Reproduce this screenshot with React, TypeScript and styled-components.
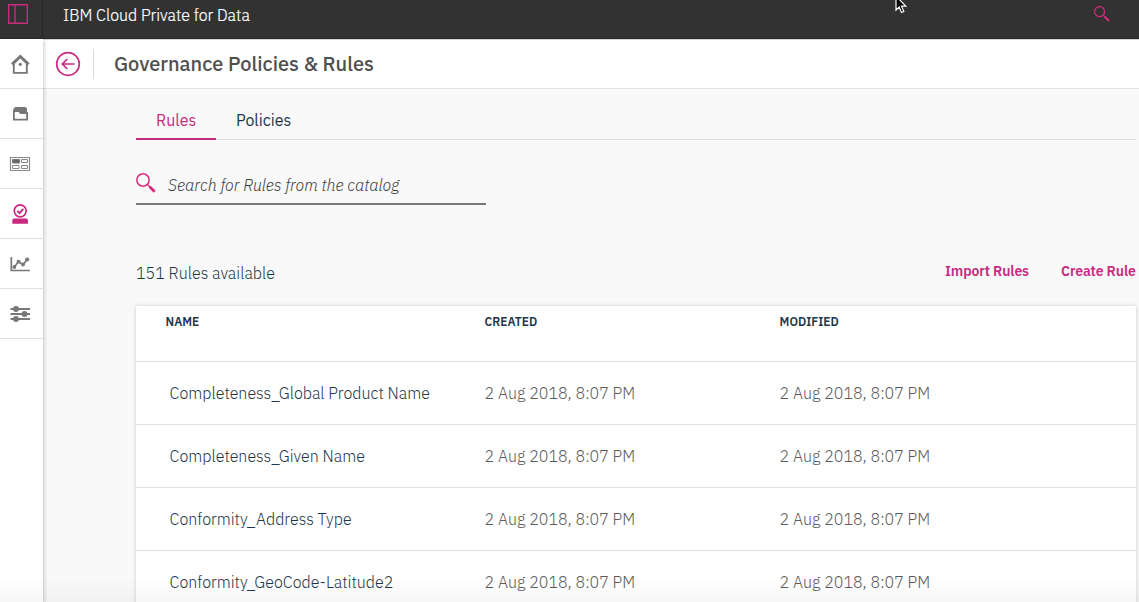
import React from "react";
import styled, { createGlobalStyle } from "styled-components";

const pink = "#c72a7f";
const navy = "#1d3649";

const GlobalStyle = createGlobalStyle`
  * { box-sizing: border-box; }
  body {
    margin: 0;
    overflow: hidden;
    background: #f9f9f9;
    font-family: "IBM Plex Sans", Roboto, sans-serif;
    font-size: 16px;
    color: ${navy};
  }
`;

const Page = styled.div`
  position: relative;
  display: flex;
  flex-direction: column;
  width: 1139px;
  height: 602px;
  overflow: hidden;
`;

const TopBar = styled.header`
  display: flex;
  flex: none;
  height: 39px;
  background: #323232;
  border-bottom: 1px solid #282828;
`;

const MenuButton = styled.div`
  width: 43px;
  padding: 4px 0 0 8px;
  border-right: 1px solid #272727;
`;

const Brand = styled.div`
  flex: 1;
  padding-left: 20px;
  line-height: 30px;
  font-weight: 300;
  -webkit-text-stroke: 0.2px #fff;
  color: #fff;
  white-space: nowrap;
`;

const TopSearch = styled.div`
  width: 45px;
  padding: 6px 0 0 0.4px;
`;

const Below = styled.div`
  display: flex;
  flex: 1;
  min-height: 0;
`;

const Sidebar = styled.nav`
  position: relative;
  z-index: 1;
  width: 43px;
  flex: none;
  background: #fff;
  box-shadow: 1px 2px 4px rgba(0, 0, 0, 0.22);
`;

const NavItem = styled.div`
  display: flex;
  align-items: center;
  height: 50px;
  padding-left: 8px;
  border-bottom: 1px solid #dfdfdf;
`;

const Main = styled.main`
  flex: 1;
  min-width: 0;
`;

const TitleBar = styled.div`
  display: flex;
  align-items: center;
  height: 50px;
  padding-left: 12px;
  background: #fff;
  border-top: 1px solid #d4d4d4;
  border-bottom: 1px solid #e3e3e3;
`;

const Divider = styled.div`
  width: 1px;
  height: 30px;
  margin: 0 20px 0 12px;
  background: #dcdcdc;
`;

const Title = styled.h1`
  margin: 0;
  padding-bottom: 2px;
  font-size: 20px;
  font-weight: 500;
  color: #505050;
  white-space: nowrap;
`;

const Content = styled.div`
  padding: 13px 3px 0 93px;
`;

const Tabs = styled.div`
  display: flex;
  height: 38px;
  box-shadow: inset 0 -1px 0 #dedede;
`;

const Tab = styled.div<{ $active?: boolean }>`
  height: 38px;
  padding: 0 20px;
  width: ${(p) => (p.$active ? "80px" : "auto")};
  line-height: 37px;
  color: ${(p) => (p.$active ? pink : navy)};
  border-bottom: ${(p) => (p.$active ? `2px solid ${pink}` : "none")};
  white-space: nowrap;
`;

const SearchField = styled.div`
  display: flex;
  width: 350px;
  height: 38px;
  margin-top: 27px;
  border-bottom: 2px solid #777a78;

  svg {
    margin-top: 6px;
  }
`;

const Placeholder = styled.span`
  padding-left: 12px;
  line-height: 37px;
  font-style: italic;
  font-weight: 300;
  color: #3c4043;
  white-space: nowrap;
`;

const Summary = styled.div`
  display: flex;
  height: 40px;
  margin-top: 48px;
`;

const Count = styled.div`
  flex: 1;
  line-height: 41px;
  font-weight: 300;
  color: ${navy};
`;

const Action = styled.div<{ $width: number }>`
  width: ${(p) => p.$width}px;
  line-height: 37px;
  font-size: 14px;
  font-weight: 600;
  letter-spacing: -0.1px;
  color: ${pink};
  white-space: nowrap;
`;

const Table = styled.div`
  height: 320px;
  margin-top: 13px;
  background: #fff;
  box-shadow: 0 0 4px rgba(0, 0, 0, 0.18);
`;

const Row = styled.div<{ $head?: boolean }>`
  display: grid;
  grid-template-columns: 319px 295px 1fr;
  height: ${(p) => (p.$head ? 56 : 63)}px;
  padding-left: 29.6px;
  line-height: ${(p) => (p.$head ? 32 : 63)}px;
  font-size: ${(p) => (p.$head ? 12 : 16)}px;
  font-weight: ${(p) => (p.$head ? 600 : 300)};
  border-bottom: 1px solid #e0e0e0;
  white-space: nowrap;
`;

const NameCell = styled.span`
  padding-left: 4px;
  color: ${navy};
`;

const DateCell = styled.span`
  color: #5a5a5a;
`;

const BottomFade = styled.div`
  position: absolute;
  inset: auto 0 0 0;
  height: 26px;
  z-index: 2;
  pointer-events: none;
  background: linear-gradient(rgba(0, 0, 0, 0), rgba(0, 0, 0, 0.03));
`;

const Pointer = styled.svg`
  position: absolute;
  left: 894px;
  top: -5px;
`;

const Magnifier = ({ size }: { size: number }) => (
  <svg width={size} height={size} viewBox="0 0 20 20" fill="none" stroke="#d92b7d">
    <circle cx="7" cy="7" r="6.2" strokeWidth="1.5" />
    <path d="M11.8 11.8l2.4 2.4" strokeWidth="1.3" />
    <path d="M13.7 13.7l5 5" strokeWidth="2.8" />
  </svg>
);

const icons = [
  <svg key="home" width="24" height="24" fill="none" stroke="#777" strokeWidth="1.9">
    <path d="M5.8 11.5v9.4h13v-9.4" />
    <path d="M4 12.4L12.3 4.5l8.3 7.9" strokeWidth="2.9" />
    <circle cx="12.3" cy="12.3" r="1.6" fill="#777" stroke="none" />
  </svg>,
  <svg key="folder" width="24" height="24" fill="none" stroke="#777" strokeWidth="1.8">
    <path d="M6 9.5V6.5l1-1h10.500l1 1v3.500z" fill="#777" strokeWidth="1" />
    <path d="M5.900 17.700V9h5l2 2h6.200v6.700z" fill="#fff" />
  </svg>,
  <svg key="cards" width="24" height="24" fill="none" stroke="#8a8a8a">
    <path d="M2.500 5.500h19v13h-19z" strokeWidth="1.200" />
    <path d="M4.500 7.500h7v3.500h-7z" fill="#666" stroke="#777" />
    <path d="M13.500 7.500h6v3h-6zM4.500 13.500h6.500v3H4.500zM13.500 13.500h6v3h-6z" />
  </svg>,
  <svg key="governance" width="24" height="24" fill="none" stroke={pink} strokeWidth="1.700">
    <circle cx="12.200" cy="8.800" r="6" />
    <path d="M9.300 8.800l2.300 2.300 3.700-4.300" strokeWidth="1.900" />
    <path d="M4.300 21.800v-3.300q0-2 2-2h11.700q2 0 2 2v3.300z" fill={pink} stroke="none" />
  </svg>,
  <svg key="chart" width="24" height="24" fill="none" stroke="#777" strokeWidth="1.700">
    <path d="M3.300 5v13.500h18.500" />
    <path d="M6 15.500l4.500-6 4.500 3.300 4-5" />
    <g fill="#777" stroke="none">
      <circle cx="6.300" cy="15" r="1.900" />
      <circle cx="10.500" cy="9.700" r="1.900" />
      <circle cx="15" cy="12.500" r="1.900" />
      <circle cx="19.200" cy="7.500" r="2.100" />
    </g>
  </svg>,
  <svg key="sliders" width="24" height="24" stroke="#777" strokeWidth="1.900" fill="#777">
    <path d="M2.500 7h19.500M2.500 12h19.500M2.500 17h19.500" />
    <circle cx="8" cy="7" r="2" />
    <circle cx="16.500" cy="12" r="2" />
    <circle cx="8" cy="17" r="2" />
  </svg>,
];

const rules = [
  "Completeness_Global Product Name",
  "Completeness_Given Name",
  "Conformity_Address Type",
  "Conformity_GeoCode-Latitude2",
];
const stamp = "2 Aug 2018, 8:07 PM";

export default function App() {
  return (
    <Page>
      <GlobalStyle />
      <TopBar>
        <MenuButton>
          <svg width="20" height="20" fill="none" stroke={pink} strokeWidth="1.400">
            <path d="M.7.7h18.600v18.600H.7zM7 .7v18.600" />
          </svg>
        </MenuButton>
        <Brand>IBM Cloud Private for Data</Brand>
        <TopSearch><Magnifier size={16} /></TopSearch>
      </TopBar>
      <Below>
        <Sidebar>
          {icons.map((icon) => <NavItem key={icon.key}>{icon}</NavItem>)}
        </Sidebar>
        <Main>
          <TitleBar>
            <svg width="26" height="26" fill="none" stroke={pink} strokeWidth="1.700">
              <circle cx="13" cy="13" r="11.300" />
              <path d="M19.500 13H7.500M12.300 8l-5 5 5 5" />
            </svg>
            <Divider />
            <Title>Governance Policies &amp; Rules</Title>
          </TitleBar>
          <Content>
            <Tabs>
              <Tab $active>Rules</Tab>
              <Tab>Policies</Tab>
            </Tabs>
            <SearchField>
              <Magnifier size={20} />
              <Placeholder>Search for Rules from the catalog</Placeholder>
            </SearchField>
            <Summary>
              <Count>151 Rules available</Count>
              <Action $width={116}>Import Rules</Action>
              <Action $width={75}>Create Rule</Action>
            </Summary>
            <Table>
              <Row $head>
                <span>NAME</span>
                <span>CREATED</span>
                <span>MODIFIED</span>
              </Row>
              {rules.map((rule) => (
                <Row key={rule}>
                  <NameCell>{rule}</NameCell>
                  <DateCell>{stamp}</DateCell>
                  <DateCell>{stamp}</DateCell>
                </Row>
              ))}
            </Table>
          </Content>
        </Main>
      </Below>
      <BottomFade />
      <Pointer width="14" height="20" fill="#000" stroke="#fff" strokeWidth="1.200">
        <path d="M2 1v14l3.200-3 2.300 5.500 2.300-1-2.300-5.300h4.300z" />
      </Pointer>
    </Page>
  );
}
